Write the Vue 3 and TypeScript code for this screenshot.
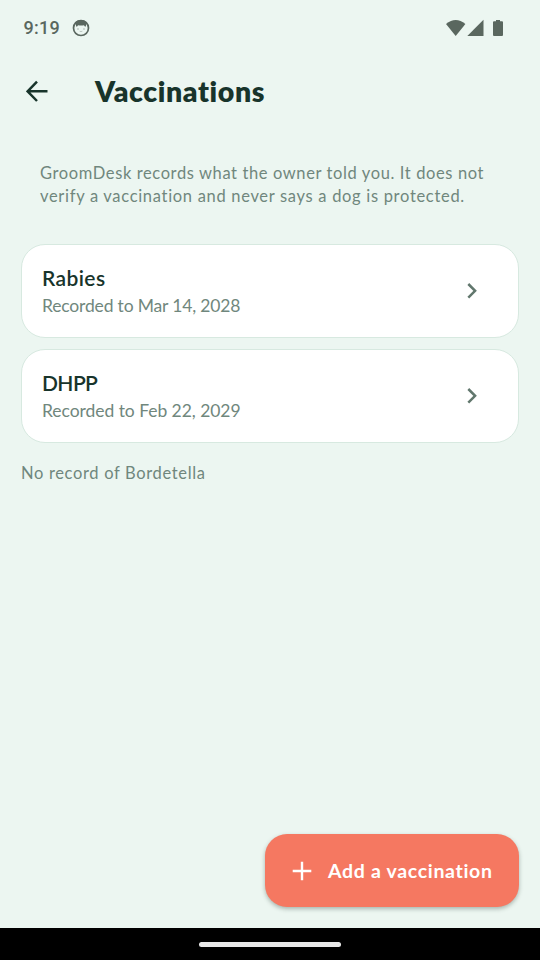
<script setup lang="ts">
interface Vaccination {
  name: string
  until: string
  key: string
}

const vaccinations: Vaccination[] = [
  { key: 'rabies', name: 'Rabies', until: 'Recorded to Mar 14, 2028' },
  { key: 'dhpp', name: 'DHPP', until: 'Recorded to Feb 22, 2029' },
]
</script>

<template>
  <div class="screen">
    <div class="status">
      <span class="clock">9:19</span>
      <svg class="face" width="18" height="18" viewBox="0 0 18 18">
        <circle cx="9" cy="9" r="7.500" fill="none" stroke="#5a675f" stroke-width="1.700" />
        <path d="M3 3.400Q9-1.200 15 3.400L13.600 7.800Q12.400 7.400 12 6.200Q9 7 6 6.200Q5.600 7.400 4.400 7.800Z" fill="#5a675f" />
        <circle cx="6" cy="10" r=".7" fill="#98a49d" />
        <circle cx="12" cy="10" r=".7" fill="#98a49d" />
        <path d="M7.600 12.200Q9 13 10.400 12.200" fill="none" stroke="#b0bbb5" stroke-width=".8" />
      </svg>
      <svg class="signals" width="60" height="20" viewBox="0 0 60 20">
        <g fill="#5a675f">
          <path d="M0 5.100Q9.700-2.900 19.400 5.100L9.700 17Z" />
          <path d="M37.500 .8V17H21.300Z" />
          <path d="M50 1H54V2.200H56Q57 2.200 57 3.200V16Q57 17 56 17H48Q47 17 47 16V3.200Q47 2.200 48 2.200H50Z" />
        </g>
      </svg>
    </div>

    <header class="bar">
      <button class="back" aria-label="Back">
        <svg width="22" height="22" viewBox="0 0 22 22" fill="none" stroke="#18342b" stroke-width="2.500">
          <path d="M21.500 11.300H2M11 1.600L1.600 11.300L11 21" />
        </svg>
      </button>
      <h1>Vaccinations</h1>
    </header>

    <main>
      <p class="notice">
        <span>GroomDesk records what the owner told you. It does not</span><br />
        <span class="second">verify a vaccination and never says a dog is protected.</span>
      </p>
      <ul class="cards">
        <li v-for="v in vaccinations" :key="v.key" class="card" :class="v.key">
          <div class="record">
            <div class="name">{{ v.name }}</div>
            <div class="until">{{ v.until }}</div>
          </div>
          <svg width="12" height="16" viewBox="0 0 12 16" fill="none" stroke="#61776d" stroke-width="2.500">
            <path d="M2.300 1L9.100 7.800L2.300 14.600" />
          </svg>
        </li>
      </ul>
      <p class="missing">No record of Bordetella</p>
    </main>

    <div class="actions">
      <button class="add">
        <svg width="20" height="20" viewBox="0 0 20 20" stroke="#fff" stroke-width="2.400">
          <path d="M10 .7V19.300M.7 10H19.300" />
        </svg>
        <span>Add a vaccination</span>
      </button>
    </div>
    <div class="nav"><div class="handle"></div></div>
  </div>
</template>

<style>
body {
  background: #ecf6f1;
}
</style>

<style scoped>
.screen {
  width: 540px;
  height: 960px;
  box-sizing: border-box;
  display: flex;
  flex-direction: column;
  background: #ecf6f1;
  color: #18342b;
  font-family: Lato, 'Liberation Sans', sans-serif;
  font-variant-ligatures: none;
  white-space: nowrap;
}
button {
  border: 0;
  padding: 0;
  background: none;
  font: inherit;
  color: inherit;
}
.status {
  height: 56px;
  padding: 0 34px 0 23.500px;
  box-sizing: border-box;
  display: flex;
  align-items: center;
  color: #5a675f;
}
.clock {
  font: 500 18px/20px Roboto, sans-serif;
  letter-spacing: 0.250px;
}
.face {
  margin-left: 12.500px;
}
.signals {
  margin-left: auto;
  padding-top: 1px;
}
.bar {
  height: 70px;
  display: flex;
  align-items: center;
  padding-left: 26px;
}
.back {
  display: flex;
  width: 22px;
}
h1 {
  margin: 0 0 0 47px;
  font-size: 28.500px;
  line-height: 36px;
  font-weight: 800;
  letter-spacing: 0.620px;
}
main {
  flex: 1;
  padding: 0 21px;
}
.notice {
  margin: 36px 19px 0;
  font-size: 16.500px;
  line-height: 23px;
  letter-spacing: 0.610px;
  color: #70877d;
}
.second {
  letter-spacing: 0.690px;
}
.cards {
  list-style: none;
  margin: 35.500px 0 0;
  padding: 0;
  display: grid;
  gap: 11px;
}
.card {
  height: 94px;
  box-sizing: border-box;
  padding: 0 40px 0 20px;
  border: 1.500px solid #d7e9e0;
  border-radius: 24px;
  background: #fff;
  display: flex;
  align-items: center;
  justify-content: space-between;
}
.record {
  padding-top: 2px;
}
.name {
  font-size: 21px;
  line-height: 27px;
  font-weight: 600;
}
.until {
  margin-top: 1px;
  font-size: 17.500px;
  line-height: 28px;
  color: #70877d;
}
.rabies .name {
  letter-spacing: 0.400px;
}
.dhpp .name {
  letter-spacing: -0.600px;
}
.rabies .until {
  letter-spacing: -0.170px;
}
.dhpp .until {
  letter-spacing: -0.050px;
}
.missing {
  margin: 18.500px 0 0;
  font-size: 16.500px;
  line-height: 24px;
  letter-spacing: 0.660px;
  color: #70877d;
}
.actions {
  display: flex;
  justify-content: flex-end;
  padding: 0 21px 21px;
}
.add {
  width: 254px;
  height: 73px;
  box-sizing: border-box;
  padding-left: 27px;
  display: flex;
  align-items: center;
  gap: 16px;
  border-radius: 22px;
  background: #f57861;
  color: #fff;
  font-size: 19.500px;
  font-weight: 700;
  letter-spacing: 0.680px;
  box-shadow: 0 2px 4px rgba(40, 60, 50, 0.350);
}
.nav {
  height: 32px;
  background: #000;
  display: flex;
  align-items: center;
  justify-content: center;
}
.handle {
  width: 142px;
  height: 5px;
  border-radius: 3px;
  background: #e8e8e8;
}
</style>
